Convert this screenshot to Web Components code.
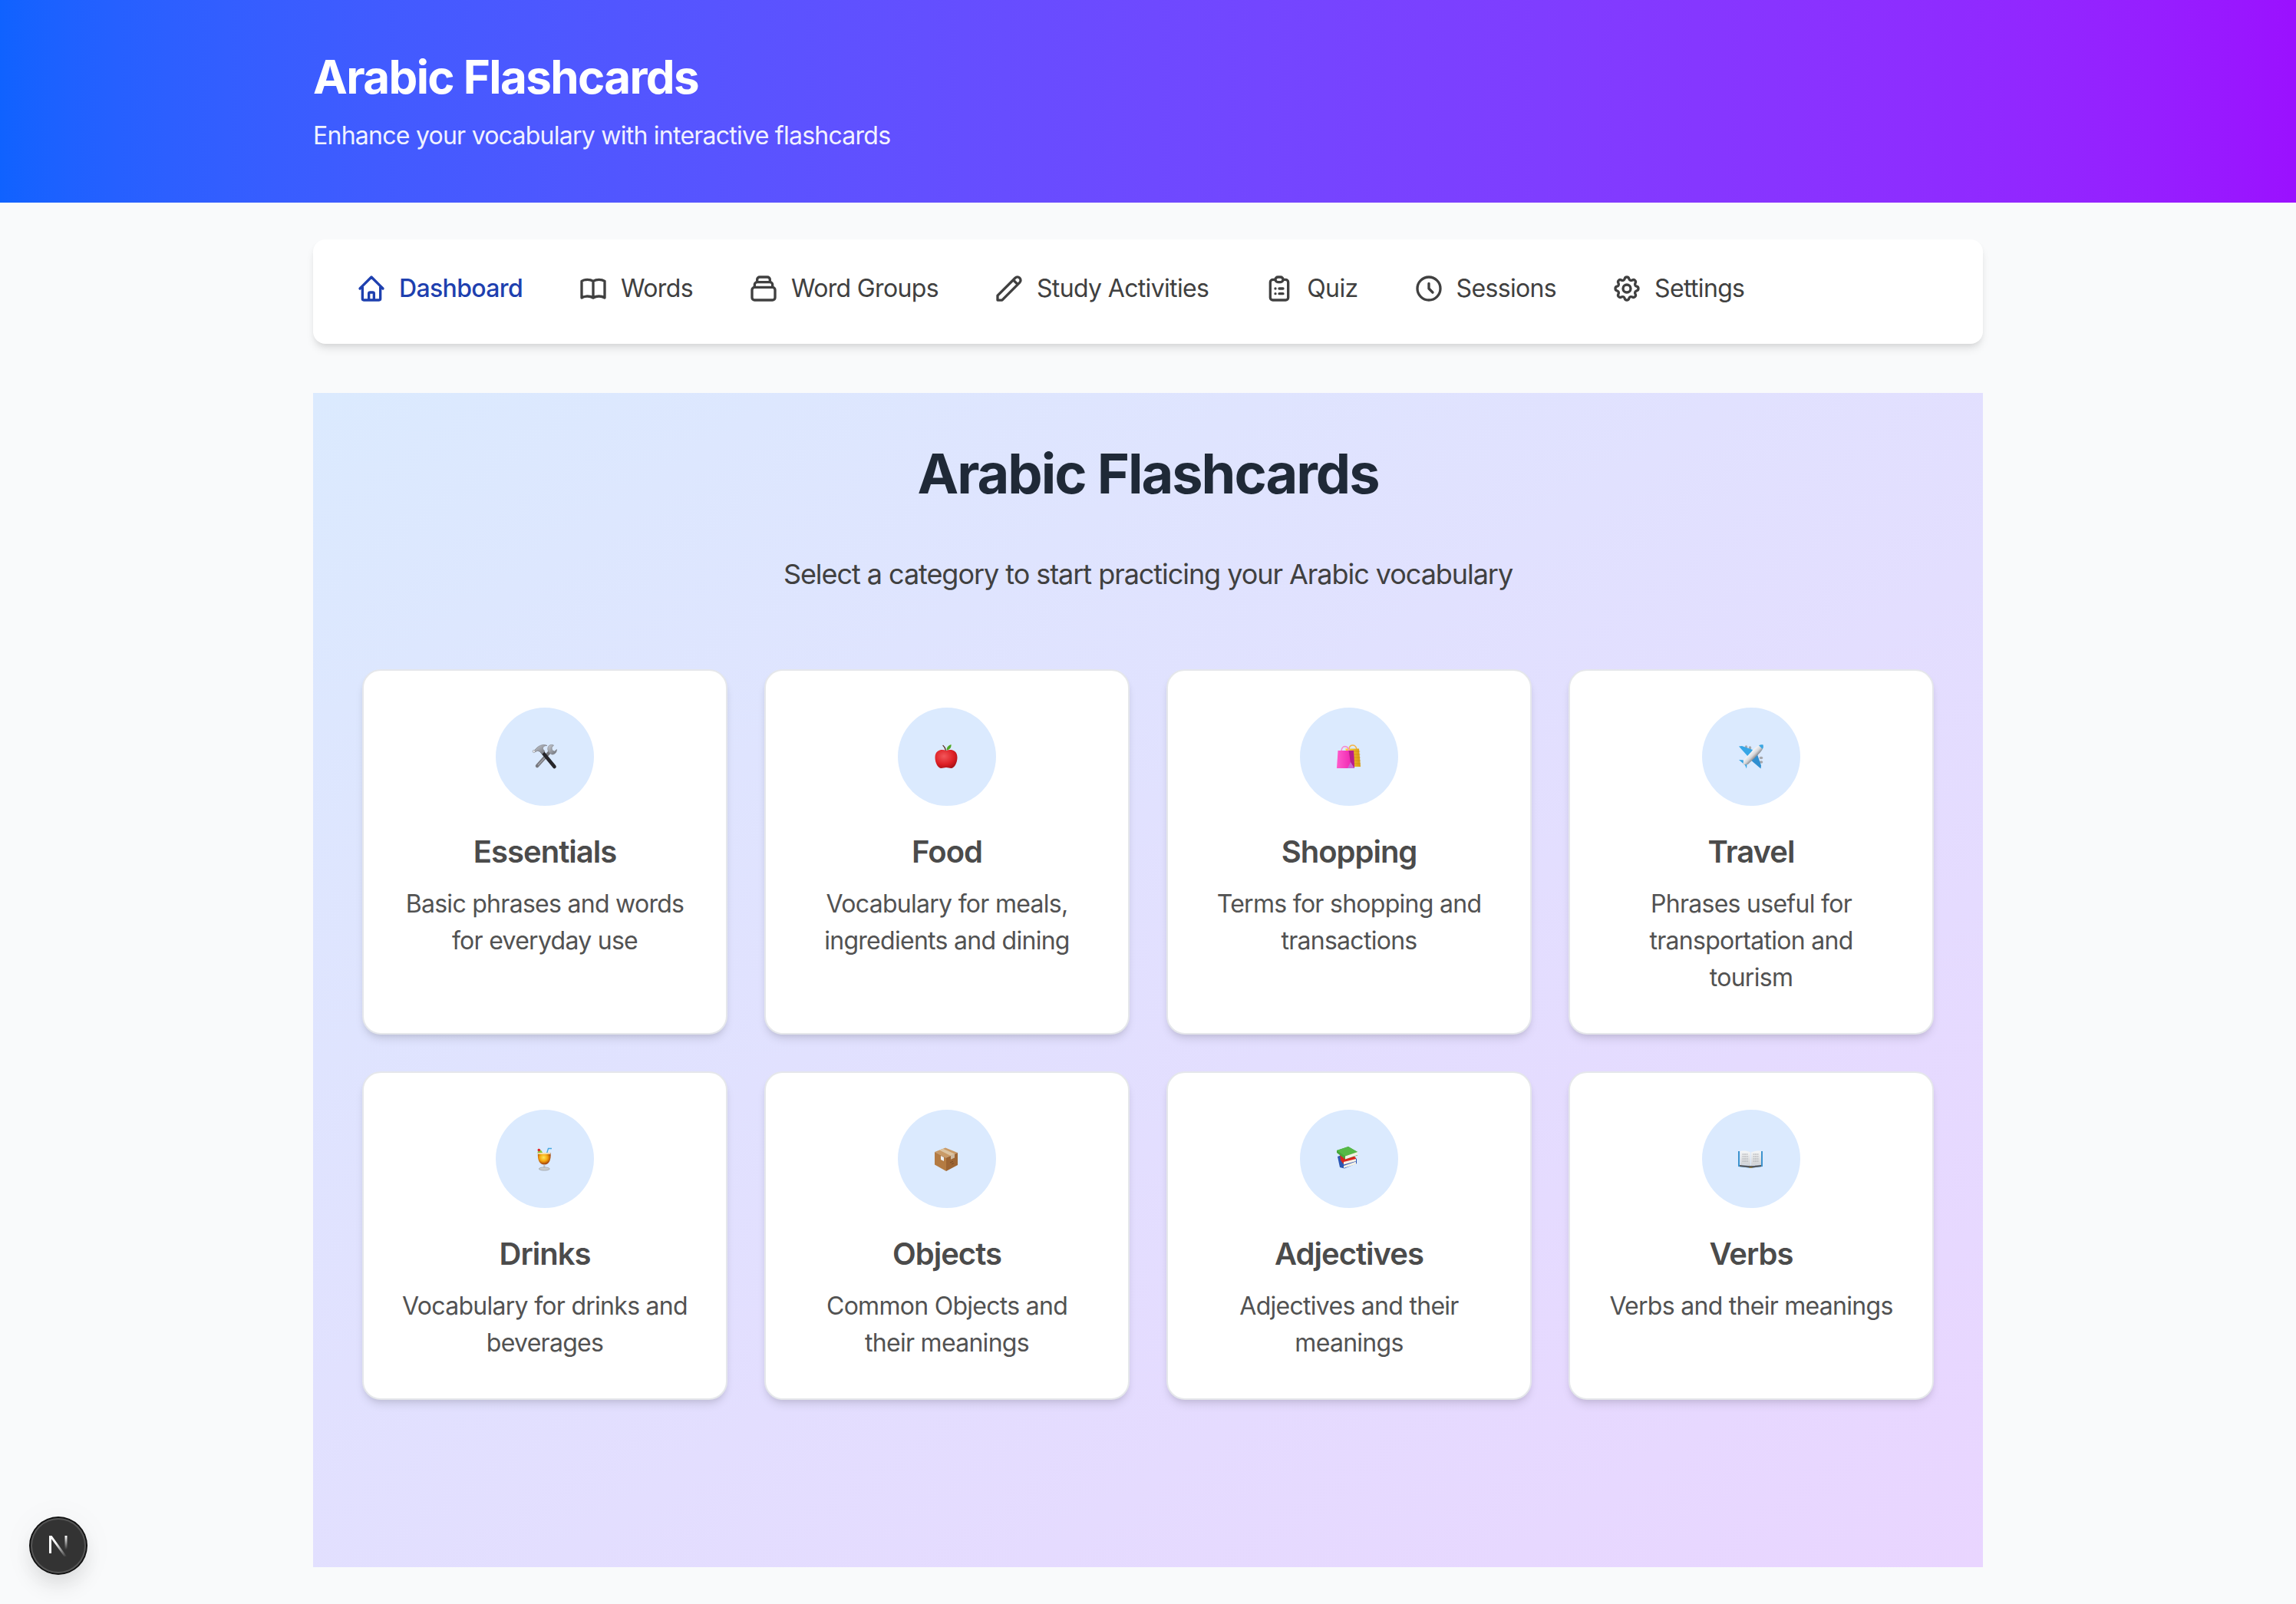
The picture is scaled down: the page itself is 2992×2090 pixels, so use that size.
<!DOCTYPE html>
<html lang="en">
<head>
<meta charset="utf-8">
<title>Arabic Flashcards</title>
<style>
  html, body {
    height: 100%;
    margin: 0;
  }

  body {
    background: #f9fafb;
    color: #404040;
    display: flex;
    flex-direction: column;
    font-family: Inter, 'Liberation Sans', sans-serif;
  }
</style>
</head>
<body>
  <fc-header>
    <span slot="title">Arabic Flashcards</span>
    Enhance your vocabulary with interactive flashcards
  </fc-header>

  <fc-main>
    <fc-nav>
      <fc-nav-item icon="home" active>Dashboard</fc-nav-item>
      <fc-nav-item icon="book">Words</fc-nav-item>
      <fc-nav-item icon="collection">Word Groups</fc-nav-item>
      <fc-nav-item icon="pencil">Study Activities</fc-nav-item>
      <fc-nav-item icon="clipboard">Quiz</fc-nav-item>
      <fc-nav-item icon="clock">Sessions</fc-nav-item>
      <fc-nav-item icon="cog">Settings</fc-nav-item>
    </fc-nav>

    <fc-panel>
      <span slot="title">Arabic Flashcards</span>
      <span slot="lead">Select a category to start practicing your Arabic vocabulary</span>
      <fc-card emoji="tools" label="Essentials">Basic phrases and words for everyday use</fc-card>
      <fc-card emoji="apple" label="Food">Vocabulary for meals, ingredients and dining</fc-card>
      <fc-card emoji="bags" label="Shopping">Terms for shopping and transactions</fc-card>
      <fc-card emoji="plane" label="Travel">Phrases useful for transportation and tourism</fc-card>
      <fc-card emoji="drink" label="Drinks">Vocabulary for drinks and beverages</fc-card>
      <fc-card emoji="box" label="Objects">Common Objects and their meanings</fc-card>
      <fc-card emoji="books" label="Adjectives">Adjectives and their meanings</fc-card>
      <fc-card emoji="open-book" label="Verbs">Verbs and their meanings</fc-card>
    </fc-panel>
  </fc-main>

  <fc-dev-badge></fc-dev-badge>

<script>
// Outline icons for the nav, 24 grid
const NAV_ICONS = {
  home: 'M3 12l2-2m0 0l7-7 7 7M5 10v10a1 1 0 001 1h3m10-11l2 2m-2-2v10a1 1 0 01-1 1h-3m-6 0a1 1 0 001-1v-4a1 1 0 011-1h2a1 1 0 011 1v4a1 1 0 001 1m-6 0h6',
  book: 'M12 6.253v13m0-13C10.832 5.477 9.246 5 7.5 5S4.168 5.477 3 6.253v13C4.168 18.477 5.754 18 7.5 18s3.332.477 4.5 1.253m0-13C13.168 5.477 14.754 5 16.5 5c1.747 0 3.332.477 4.5 1.253v13C19.832 18.477 18.247 18 16.5 18c-1.746 0-3.332.477-4.5 1.253',
  collection: 'M19 11H5m14 0a2 2 0 012 2v6a2 2 0 01-2 2H5a2 2 0 01-2-2v-6a2 2 0 012-2m14 0V9a2 2 0 00-2-2M5 11V9a2 2 0 012-2m0 0V5a2 2 0 012-2h6a2 2 0 012 2v2M7 7h10',
  pencil: 'M15.232 5.232l3.536 3.536m-2.036-5.036a2.5 2.5 0 113.536 3.536L6.5 21.036H3v-3.572L16.732 3.732z',
  clipboard: 'M9 5H7a2 2 0 00-2 2v12a2 2 0 002 2h10a2 2 0 002-2V7a2 2 0 00-2-2h-2M9 5a2 2 0 002 2h2a2 2 0 002-2M9 5a2 2 0 012-2h2a2 2 0 012 2m-3 7h3m-3 4h3m-6-4h.01M9 16h.01',
  clock: 'M12 8v4l3 3m6-3a9 9 0 11-18 0 9 9 0 0118 0z',
  cog: 'M10.325 4.317c.426-1.756 2.924-1.756 3.35 0a1.724 1.724 0 002.573 1.066c1.543-.94 3.31.826 2.37 2.37a1.724 1.724 0 001.065 2.572c1.756.426 1.756 2.924 0 3.35a1.724 1.724 0 00-1.066 2.573c.94 1.543-.826 3.31-2.37 2.37a1.724 1.724 0 00-2.572 1.065c-.426 1.756-2.924 1.756-3.35 0a1.724 1.724 0 00-2.573-1.066c-1.543.94-3.31-.826-2.37-2.37a1.724 1.724 0 00-1.065-2.572c-1.756-.426-1.756-2.924 0-3.35a1.724 1.724 0 001.066-2.573c-.94-1.543.826-3.31 2.37-2.37.996.608 2.296.07 2.572-1.065zM15 12a3 3 0 11-6 0 3 3 0 016 0z'
};

// Category pictures, 32 grid
const EMOJIS = {
  tools: `
    <defs>
      <linearGradient id="steel" x1="0" y1="0" x2="1" y2="1"><stop offset="0" stop-color="#c9ccd2"/><stop offset="1" stop-color="#6d7078"/></linearGradient>
    </defs>
    <path d="M23 9 L6 28" stroke="#77787e" stroke-width="4.4" stroke-linecap="round"/>
    <path d="M7.5 26.5 L18 15" stroke="#a4a5ab" stroke-width="1.4" stroke-linecap="round"/>
    <path d="M21.5 1.5 C19 4 19.5 8 21.5 10.5 L25 13 C28 13.5 31.5 11 31.5 6.5 L28.5 9 L25.5 7.5 L25 4 L27.5 1 C25.5 0 23 .3 21.5 1.5Z" fill="url(#steel)" stroke="#7b7e85" stroke-width=".6"/>
    <path d="M12 9 L28.5 29" stroke="#26262a" stroke-width="4.6" stroke-linecap="round"/>
    <path d="M1 9 L6 4 C10 .5 15 -.5 19 1.5 C15 1.5 13 3.5 13.5 6 L16 9 L12.5 12.5 L9.5 9.5 C7 8 5.5 8 4.5 9.5Z" fill="url(#steel)" stroke="#74767c" stroke-width=".6"/>
    <circle cx="1.8" cy="9" r="1.7" fill="#e8e9ec" stroke="#7b7e85" stroke-width=".5"/>`,
  apple: `
    <defs>
      <radialGradient id="red" cx=".4" cy=".35" r=".75"><stop offset="0" stop-color="#f3565a"/><stop offset=".6" stop-color="#dd1f24"/><stop offset="1" stop-color="#9f0f14"/></radialGradient>
    </defs>
    <path d="M11 1.5 C13 3 14 5 14.5 8" stroke="#5b3325" stroke-width="1.3" fill="none" stroke-linecap="round"/>
    <path d="M15.5 7.5 C15.5 3.5 18.5 .8 21.5 0 C22 3.5 20 7 15.5 7.5Z" fill="#4ea924"/>
    <path d="M15 8 C10 5.8 .5 6.5 .5 17 C.5 24 4.500 31 8.5 31 C11 31 12.5 30 15 30 C17.5 30 19 31 21.5 31 C25.5 31 29.5 24 29.5 17 C29.5 6.5 20 5.8 15 8Z" fill="url(#red)"/>`,
  bags: `
    <defs>
      <linearGradient id="pink" x1="0" y1="0" x2="1" y2="0"><stop offset="0" stop-color="#ff5ccb"/><stop offset=".75" stop-color="#f12cb4"/><stop offset="1" stop-color="#c4269a"/></linearGradient>
      <linearGradient id="gold" x1="0" y1="0" x2="1" y2="0"><stop offset="0" stop-color="#ffd83a"/><stop offset="1" stop-color="#d99a14"/></linearGradient>
    </defs>
    <path d="M16 7 C16 -.5 24 -1 26 6" stroke="#f5b545" stroke-width="1.6" fill="none"/>
    <path d="M11 5.5 L29 5.500 L31 29 L20 29Z" fill="url(#gold)"/>
    <path d="M21 9h9.3M21 13h9.6M21 17h9.9M21 21h10M21 25h10" stroke="#c98a10" stroke-opacity=".55" stroke-width="1"/>
    <path d="M6 9 C6 .5 15 .5 16 9" stroke="#f58ccf" stroke-width="1.6" fill="none"/>
    <path d="M1.5 8 L22 8 L23 31 L0 31Z" fill="url(#pink)"/>
    <path d="M15.5 8 L22 8 L23 31 L18 24Z" fill="#b81e8c"/>
    <path d="M14 31 L18 23 L23 31Z" fill="#c86ad0"/>`,
  plane: `
    <defs>
      <linearGradient id="hull" x1="0" y1="0" x2="1" y2="0"><stop offset="0" stop-color="#f7f7f8"/><stop offset=".55" stop-color="#d5d6d9"/><stop offset="1" stop-color="#85878c"/></linearGradient>
    </defs>
    <ellipse cx="9.5" cy="3.5" rx="1.7" ry="2.3" fill="#a5a7ab"/>
    <ellipse cx="14.5" cy="4.5" rx="1.7" ry="2.3" fill="#a5a7ab"/>
    <ellipse cx="29" cy="17.5" rx="2.3" ry="1.7" fill="#a5a7ab"/>
    <ellipse cx="29" cy="23" rx="2.3" ry="1.7" fill="#a5a7ab"/>
    <path d="M0 2.500 L4 2 L18 7 L13 17Z" fill="#37a6e6"/>
    <path d="M28.5 31.5 L29 27.5 L24 13 L14 19Z" fill="#2f8fd0"/>
    <path d="M0 20 L7.5 20.5 L11 21 L10 31.5 L8 27Z" fill="#38a4e2"/>
    <g transform="rotate(45 16 16)">
      <path d="M16 -6 C20 -4 20.5 2 20.5 8 L20 26 L16 31 L12 26 L11.5 8 C11.5 2 12 -4 16 -6Z" fill="url(#hull)"/>
      <path d="M16 -6 C17.8 -5 18.8 -3.5 19.4 -1.5 L12.6 -1.5 C13.2 -3.5 14.2 -5 16 -6Z" fill="#3aa7e4"/>
    </g>`,
  drink: `
    <defs>
      <radialGradient id="juice" cx=".45" cy=".4" r=".7"><stop offset="0" stop-color="#ffe65a"/><stop offset=".45" stop-color="#f5a50c"/><stop offset=".8" stop-color="#a8460a"/><stop offset="1" stop-color="#4e1d08"/></radialGradient>
    </defs>
    <g transform="translate(6 0)">
      <path d="M12.5 9 L14.500 2.5 L19 2.500" stroke="#46a8e0" stroke-width="1.4" fill="none"/>
      <path d="M.5 8 C.5 4.5 4.500 3.500 6 6 L7.5 9 L2 11Z" fill="#8cc63f"/>
      <path d="M1 .5 L2.500 5" stroke="#e8dfd7" stroke-width="1"/>
      <circle cx="2.3" cy="4.5" r="1.8" fill="#de2026"/>
      <path d="M1 8 L17.5 8 C18.5 18 15 23.5 9.3 23.5 C3.5 23.5 0 18 1 8Z" fill="url(#juice)"/>
      <path d="M1 8 L17.5 8 L17.4 10 L1.100 10Z" fill="#f7f0cf" opacity=".8"/>
      <rect x="8.3" y="23.5" width="2" height="4.500" fill="#bfc2c4"/>
      <ellipse cx="9.3" cy="29" rx="7" ry="2.100" fill="#c9cccd" stroke="#8e9193" stroke-width=".6"/>
    </g>`,
  box: `
    <path d="M0 7 L14 1.500 L30 8 L15 14.500Z" fill="#c99a66"/>
    <path d="M0 7 L15 14.500 L15 32 L0 23.500Z" fill="#b47b42"/>
    <path d="M15 14.500 L30 8 L30 24 L15 32Z" fill="#9d6533"/>
    <path d="M6 4.600 L11 2.700 L26 9.500 L21 11.900Z" fill="#dcc3a0"/>
    <path d="M21 11.900 L26 9.500 L26 14.500 L21 16.800Z" fill="#cdb9a0"/>
    <path d="M8 12 L12 14 L12 19 L8 17Z" fill="#eef0f2"/>
    <path d="M20 21 L24 19.200 M22 23 L25 21.600" stroke="#6d4420" stroke-width=".8"/>`,
  books: `
    <path d="M1 13 L14 8 L26 16 L26 22 L10 28.500 L4 27Z" fill="#2c56b3"/>
    <path d="M9 25 L25 19.500 L25 23 L9 28Z" fill="#f3f0e6"/>
    <path d="M4 10 L18 7 L25 15 L25 18.500 L9 23 L5 18Z" fill="#d8261f"/>
    <path d="M9 20 L25 16 L25 19 L9 23.500Z" fill="#f5f2e8"/>
    <path d="M0 5 L15 0 L27 7 L27 11.500 L11 16.500 L0 8Z" fill="#46a63a"/>
    <path d="M0 5 L15 0 L27 7 L11 12.500Z" fill="#55b946"/>
    <path d="M11 12.500 L27 7 L27 11 L11 16.500Z" fill="#f2f1e4"/>`,
  'open-book': `
    <defs>
      <linearGradient id="paper" x1="0" y1="0" x2="0" y2="1"><stop offset="0" stop-color="#f5f6f7"/><stop offset="1" stop-color="#cfd1d4"/></linearGradient>
    </defs>
    <g transform="translate(0 5)">
      <path d="M0 1 L2 1 L2 20 L14 21 L18 21 L30 20 L30 1 L32 1 L32 21 L18 22.500 L14 22.500 L0 21Z" fill="#3c93ce" transform="translate(-1 0)"/>
      <path d="M1 19 L14 20 L18 20 L29 19 L29 21 L18 22.500 L14 22.500 L1 21Z" fill="#55575b"/>
      <path d="M2 1 C6 0 11 .5 15 2.500 L15 20 C11 18.500 6 18 2 19Z" fill="url(#paper)"/>
      <path d="M29 1 C25 0 21 .5 16 2.500 L16 20 C21 18.500 25 18 29 19Z" fill="url(#paper)"/>
      <path d="M4.500 5h7M4.500 8h8M4.500 11h8M4.500 14h8M18.500 5h7M18.500 8h7M18.500 11h7M18.500 14h7" stroke="#a6a8ac" stroke-width="1" stroke-dasharray="2 .6"/>
      <rect x="13.500" y="21.500" width="4" height="1.500" fill="#8f7a3c"/>
    </g>`
};

class FCHeader extends HTMLElement {
  constructor() {
    super();

    this.attachShadow( {mode: 'open'} );
    this.shadowRoot.innerHTML = /* template */ `
      <style>
        :host {
          background: linear-gradient( to right in oklab, #0f62ff, #9b10ff );
          box-sizing: border-box;
          color: white;
          display: block;
          flex-shrink: 0;
          height: 264px;
          padding: 64px 408px 0 408px;
        }

        h1 {
          font-size: 60px;
          font-weight: 700;
          letter-spacing: -1.6px;
          line-height: 72px;
          margin: 0 0 17px 0;
        }

        p {
          font-size: 32px;
          letter-spacing: -0.75px;
          line-height: 48px;
          margin: 0;
          opacity: 0.92;
        }
      </style>
      <h1><slot name="title"></slot></h1>
      <p><slot></slot></p>
    `;
  }
}

class FCMain extends HTMLElement {
  constructor() {
    super();

    this.attachShadow( {mode: 'open'} );
    this.shadowRoot.innerHTML = /* template */ `
      <style>
        :host {
          box-sizing: border-box;
          display: flex;
          flex-direction: column;
          flex-grow: 1;
          gap: 64px;
          padding: 48px 408px 48px 408px;
        }
      </style>
      <slot></slot>
    `;
  }
}

class FCNav extends HTMLElement {
  constructor() {
    super();

    this.attachShadow( {mode: 'open'} );
    this.shadowRoot.innerHTML = /* template */ `
      <style>
        :host {
          align-items: center;
          background: white;
          border-radius: 16px;
          box-shadow: 0 8px 12px -2px rgba( 0, 0, 0, 0.1 ), 0 4px 8px -4px rgba( 0, 0, 0, 0.1 );
          box-sizing: border-box;
          display: flex;
          flex-shrink: 0;
          gap: 8px;
          height: 136px;
          padding: 0 24px 8px 24px;
        }
      </style>
      <slot></slot>
    `;
  }
}

class FCNavItem extends HTMLElement {
  constructor() {
    super();

    this.attachShadow( {mode: 'open'} );
    this.shadowRoot.innerHTML = /* template */ `
      <style>
        :host {
          align-items: center;
          color: #404040;
          display: flex;
          font-size: 32px;
          gap: 16px;
          letter-spacing: -0.65px;
          line-height: 48px;
          padding: 0 32px 0 32px;
          white-space: nowrap;
        }

        :host( [active] ) {
          color: #1e40af;
          font-weight: 500;
        }

        svg {
          display: block;
          fill: none;
          height: 40px;
          stroke: currentColor;
          stroke-linecap: round;
          stroke-linejoin: round;
          stroke-width: 2;
          width: 40px;
        }
      </style>
      <svg viewBox="0 0 24 24"><path></path></svg>
      <slot></slot>
    `;

    this.$path = this.shadowRoot.querySelector( 'path' );
  }

  connectedCallback() {
    this.$path.setAttribute( 'd', NAV_ICONS[this.getAttribute( 'icon' )] );
  }
}

class FCPanel extends HTMLElement {
  constructor() {
    super();

    this.attachShadow( {mode: 'open'} );
    this.shadowRoot.innerHTML = /* template */ `
      <style>
        :host {
          background: linear-gradient( to bottom right, #dbeafe, #e9d5ff );
          box-sizing: border-box;
          display: block;
          flex-grow: 1;
          padding: 64px;
        }

        h2 {
          color: #1f2937;
          font-size: 72px;
          font-weight: 700;
          letter-spacing: -2px;
          line-height: 80px;
          margin: 1px 0 63px 0;
          text-align: center;
        }

        p {
          color: #404040;
          font-size: 36px;
          letter-spacing: -1.05px;
          line-height: 56px;
          margin: 0 0 96px 0;
          text-align: center;
        }

        div {
          display: grid;
          gap: 48px;
          grid-template-columns: repeat( 4, 1fr );
        }
      </style>
      <h2><slot name="title"></slot></h2>
      <p><slot name="lead"></slot></p>
      <div><slot></slot></div>
    `;
  }
}

class FCEmoji extends HTMLElement {
  constructor() {
    super();

    this.attachShadow( {mode: 'open'} );
    this.shadowRoot.innerHTML = /* template */ `
      <style>
        :host {
          display: block;
          height: 32px;
          width: 32px;
        }

        svg {
          display: block;
          height: 32px;
          overflow: visible;
          width: 32px;
        }
      </style>
      <svg viewBox="0 0 32 32"></svg>
    `;

    this.$svg = this.shadowRoot.querySelector( 'svg' );
  }

  static get observedAttributes() {
    return ['name'];
  }

  attributeChangedCallback( name, old, value ) {
    this.$svg.innerHTML = EMOJIS[value];
  }
}

class FCCard extends HTMLElement {
  constructor() {
    super();

    this.attachShadow( {mode: 'open'} );
    this.shadowRoot.innerHTML = /* template */ `
      <style>
        :host {
          align-items: center;
          background: white;
          border: solid 2px #e5e7eb;
          border-radius: 24px;
          box-shadow: 0 8px 12px -2px rgba( 0, 0, 0, 0.1 ), 0 4px 8px -4px rgba( 0, 0, 0, 0.1 );
          box-sizing: border-box;
          display: flex;
          flex-direction: column;
          padding: 48px;
          text-align: center;
        }

        .badge {
          align-items: center;
          background: #dbeafe;
          border-radius: 50%;
          display: flex;
          height: 128px;
          justify-content: center;
          margin: 0 0 32px 0;
          width: 128px;
        }

        h3 {
          color: #4b4b4b;
          font-size: 40px;
          font-weight: 600;
          letter-spacing: -1px;
          line-height: 56px;
          margin: 0 0 16px 0;
        }

        p {
          color: #525252;
          font-size: 32px;
          letter-spacing: -0.72px;
          line-height: 48px;
          margin: 0;
        }
      </style>
      <div class="badge"><fc-emoji></fc-emoji></div>
      <h3></h3>
      <p><slot></slot></p>
    `;

    this.$emoji = this.shadowRoot.querySelector( 'fc-emoji' );
    this.$label = this.shadowRoot.querySelector( 'h3' );
  }

  connectedCallback() {
    this.$label.textContent = this.getAttribute( 'label' );
  }

  static get observedAttributes() {
    return ['emoji'];
  }

  attributeChangedCallback( name, old, value ) {
    this.$emoji.setAttribute( 'name', value );
  }
}

class FCDevBadge extends HTMLElement {
  constructor() {
    super();

    this.attachShadow( {mode: 'open'} );
    this.shadowRoot.innerHTML = /* template */ `
      <style>
        :host {
          align-items: center;
          background: #333;
          border-radius: 50%;
          bottom: 40px;
          box-shadow:
            0 0 0 2px #111,
            inset 0 0 0 2px #555,
            0 16px 32px -4px rgba( 0, 0, 0, 0.14 ),
            0 4px 48px rgba( 0, 0, 0, 0.05 );
          display: flex;
          height: 72px;
          justify-content: center;
          left: 40px;
          position: fixed;
          width: 72px;
        }

        svg {
          display: block;
          height: 30px;
          width: 30px;
        }
      </style>
      <svg viewBox="0 0 30 30" fill="none">
        <defs>
          <linearGradient id="diag" x1="0" y1="0" x2="1" y2="1">
            <stop offset="0.35" stop-color="white"/>
            <stop offset="1" stop-color="white" stop-opacity="0"/>
          </linearGradient>
          <linearGradient id="bar" x1="0" y1="0" x2="0" y2="1">
            <stop offset="0" stop-color="white"/>
            <stop offset="0.75" stop-color="white" stop-opacity="0"/>
          </linearGradient>
        </defs>
        <rect x="3" y="2" width="3" height="23" fill="white"/>
        <path d="M3 2 H6.5 L26 29 H22.5 Z" fill="url(#diag)"/>
        <rect x="23.5" y="2" width="3" height="24" fill="url(#bar)"/>
      </svg>
    `;
  }
}

window.customElements.define( 'fc-header', FCHeader );
window.customElements.define( 'fc-main', FCMain );
window.customElements.define( 'fc-nav', FCNav );
window.customElements.define( 'fc-nav-item', FCNavItem );
window.customElements.define( 'fc-panel', FCPanel );
window.customElements.define( 'fc-emoji', FCEmoji );
window.customElements.define( 'fc-card', FCCard );
window.customElements.define( 'fc-dev-badge', FCDevBadge );
</script>
</body>
</html>
